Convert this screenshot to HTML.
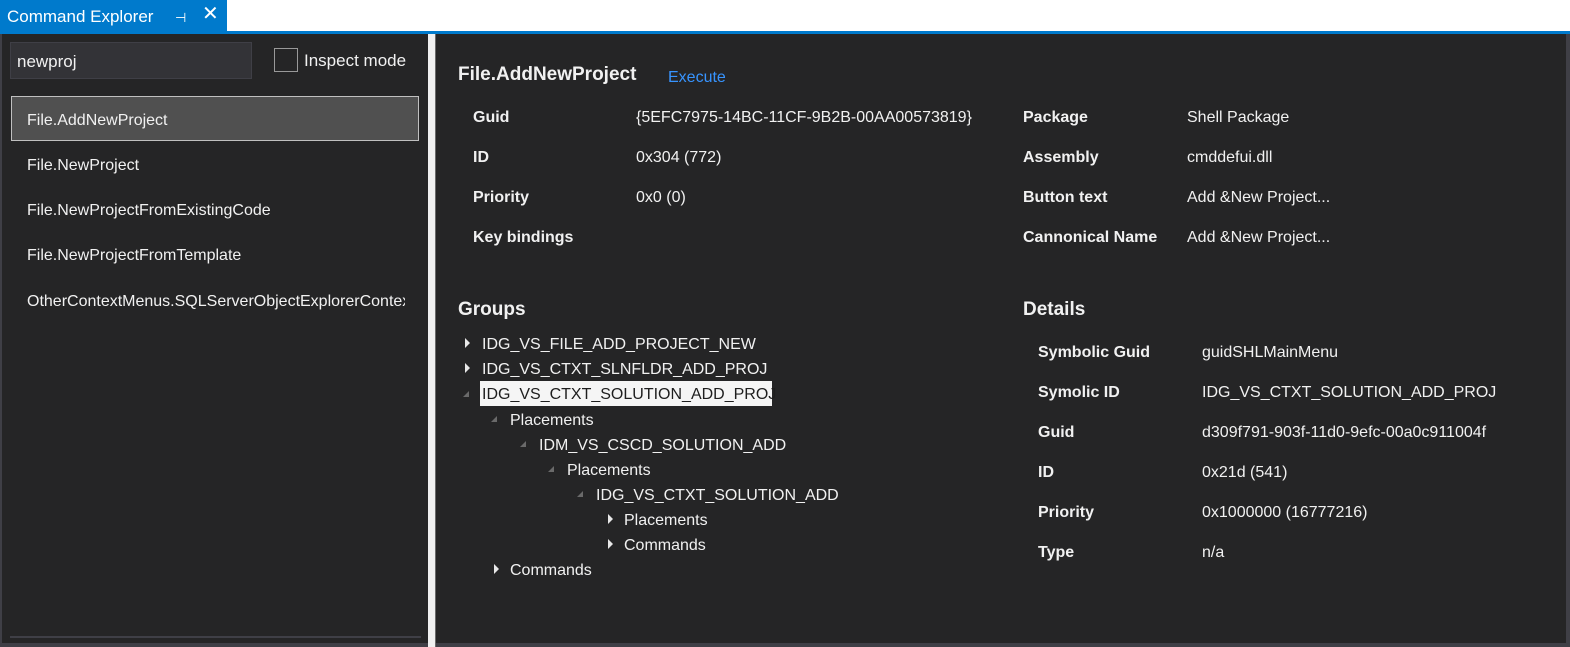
<!DOCTYPE html>
<html><head><meta charset="utf-8"><style>
*{margin:0;padding:0;box-sizing:border-box}
body{width:1570px;height:647px;background:#fff;position:relative;overflow:hidden;font-family:"Segoe UI","Liberation Sans",sans-serif;font-size:16px;color:#f1f1f1}
.a{position:absolute;white-space:nowrap}
.t{position:absolute;line-height:20px;white-space:nowrap;margin-top:2px}
.b{font-weight:bold}
.tri{position:absolute;width:0;height:0;border-top:5px solid transparent;border-bottom:5px solid transparent;border-left:5px solid #e8e8e8}
.open{position:absolute;width:0;height:0;border-left:6px solid transparent;border-bottom:6px solid #6a6a6a}
</style></head><body>
<div class="a" style="left:0;top:0;width:227px;height:31px;background:#007acc"></div>
<div class="t" style="left:7px;top:5px;color:#fff;font-size:17px">Command Explorer</div>
<div class="t" style="left:175px;top:6px;color:#fff;font-size:13px">⊣</div>
<div class="t" style="left:202px;top:2px;color:#fff;font-size:20px">✕</div>
<div class="a" style="left:0;top:31px;width:1570px;height:3px;background:#007acc"></div>
<div class="a" style="left:0;top:34px;width:1570px;height:613px;background:#3f3f46"></div>
<div class="a" style="left:2px;top:34px;width:426px;height:609px;background:#252526"></div>
<div class="a" style="left:428px;top:34px;width:7px;height:613px;background:#f0f0f0"></div>
<div class="a" style="left:435px;top:34px;width:1px;height:613px;background:#6a6a6a"></div>
<div class="a" style="left:436px;top:34px;width:1130px;height:609px;background:#252526"></div>

<div class="a" style="left:10px;top:42px;width:242px;height:37px;background:#333337;border:1px solid #3f3f46"></div>
<div class="t" style="left:17px;top:50px;font-size:17px">newproj</div>
<div class="a" style="left:274px;top:48px;width:24px;height:24px;border:1px solid #999"></div>
<div class="t" style="left:304px;top:49px;font-size:17px">Inspect mode</div>
<div class="a" style="left:11px;top:96px;width:408px;height:45px;background:#505050;border:1px solid #c0c0c0"></div>
<div class="t" style="left:27px;top:109px">File.AddNewProject</div>
<div class="t" style="left:27px;top:154px">File.NewProject</div>
<div class="t" style="left:27px;top:199px">File.NewProjectFromExistingCode</div>
<div class="t" style="left:27px;top:244px">File.NewProjectFromTemplate</div>
<div class="a" style="left:27px;top:290px;width:378px;height:24px;overflow:hidden"><div class="t" style="left:0;top:0">OtherContextMenus.SQLServerObjectExplorerContext</div></div>
<div class="a" style="left:10px;top:636px;width:411px;height:2px;background:#3f3f46"></div>

<div class="t b" style="left:458px;top:63px;font-size:19px">File.AddNewProject</div>
<div class="t" style="left:668px;top:66px;color:#3794ff">Execute</div>

<div class="t b" style="left:473px;top:106px">Guid</div><div class="t" style="left:636px;top:106px">{5EFC7975-14BC-11CF-9B2B-00AA00573819}</div>
<div class="t b" style="left:473px;top:146px">ID</div><div class="t" style="left:636px;top:146px">0x304 (772)</div>
<div class="t b" style="left:473px;top:186px">Priority</div><div class="t" style="left:636px;top:186px">0x0 (0)</div>
<div class="t b" style="left:473px;top:226px">Key bindings</div>
<div class="t b" style="left:1023px;top:106px">Package</div><div class="t" style="left:1187px;top:106px">Shell Package</div>
<div class="t b" style="left:1023px;top:146px">Assembly</div><div class="t" style="left:1187px;top:146px">cmddefui.dll</div>
<div class="t b" style="left:1023px;top:186px">Button text</div><div class="t" style="left:1187px;top:186px">Add &amp;New Project...</div>
<div class="t b" style="left:1023px;top:226px">Cannonical Name</div><div class="t" style="left:1187px;top:226px">Add &amp;New Project...</div>

<div class="t b" style="left:458px;top:298px;font-size:19px">Groups</div>
<div class="t b" style="left:1023px;top:298px;font-size:19px">Details</div>

<div class="tri" style="left:465px;top:338px"></div><div class="t" style="left:482px;top:333px">IDG_VS_FILE_ADD_PROJECT_NEW</div>
<div class="tri" style="left:465px;top:363px"></div><div class="t" style="left:482px;top:358px">IDG_VS_CTXT_SLNFLDR_ADD_PROJ</div>
<div class="open" style="left:463px;top:391px"></div>
<div class="a" style="left:480px;top:381px;width:292px;height:25px;background:#f5f5f5"></div><div class="t" style="left:482px;top:383px;color:#1e1e1e">IDG_VS_CTXT_SOLUTION_ADD_PROJ</div>
<div class="open" style="left:491px;top:416px"></div><div class="t" style="left:510px;top:409px">Placements</div>
<div class="open" style="left:520px;top:441px"></div><div class="t" style="left:539px;top:434px">IDM_VS_CSCD_SOLUTION_ADD</div>
<div class="open" style="left:548px;top:466px"></div><div class="t" style="left:567px;top:459px">Placements</div>
<div class="open" style="left:577px;top:491px"></div><div class="t" style="left:596px;top:484px">IDG_VS_CTXT_SOLUTION_ADD</div>
<div class="tri" style="left:608px;top:514px"></div><div class="t" style="left:624px;top:509px">Placements</div>
<div class="tri" style="left:608px;top:539px"></div><div class="t" style="left:624px;top:534px">Commands</div>
<div class="tri" style="left:494px;top:564px"></div><div class="t" style="left:510px;top:559px">Commands</div>

<div class="t b" style="left:1038px;top:341px">Symbolic Guid</div><div class="t" style="left:1202px;top:341px">guidSHLMainMenu</div>
<div class="t b" style="left:1038px;top:381px">Symolic ID</div><div class="t" style="left:1202px;top:381px">IDG_VS_CTXT_SOLUTION_ADD_PROJ</div>
<div class="t b" style="left:1038px;top:421px">Guid</div><div class="t" style="left:1202px;top:421px">d309f791-903f-11d0-9efc-00a0c911004f</div>
<div class="t b" style="left:1038px;top:461px">ID</div><div class="t" style="left:1202px;top:461px">0x21d (541)</div>
<div class="t b" style="left:1038px;top:501px">Priority</div><div class="t" style="left:1202px;top:501px">0x1000000 (16777216)</div>
<div class="t b" style="left:1038px;top:541px">Type</div><div class="t" style="left:1202px;top:541px">n/a</div>
</body></html>
